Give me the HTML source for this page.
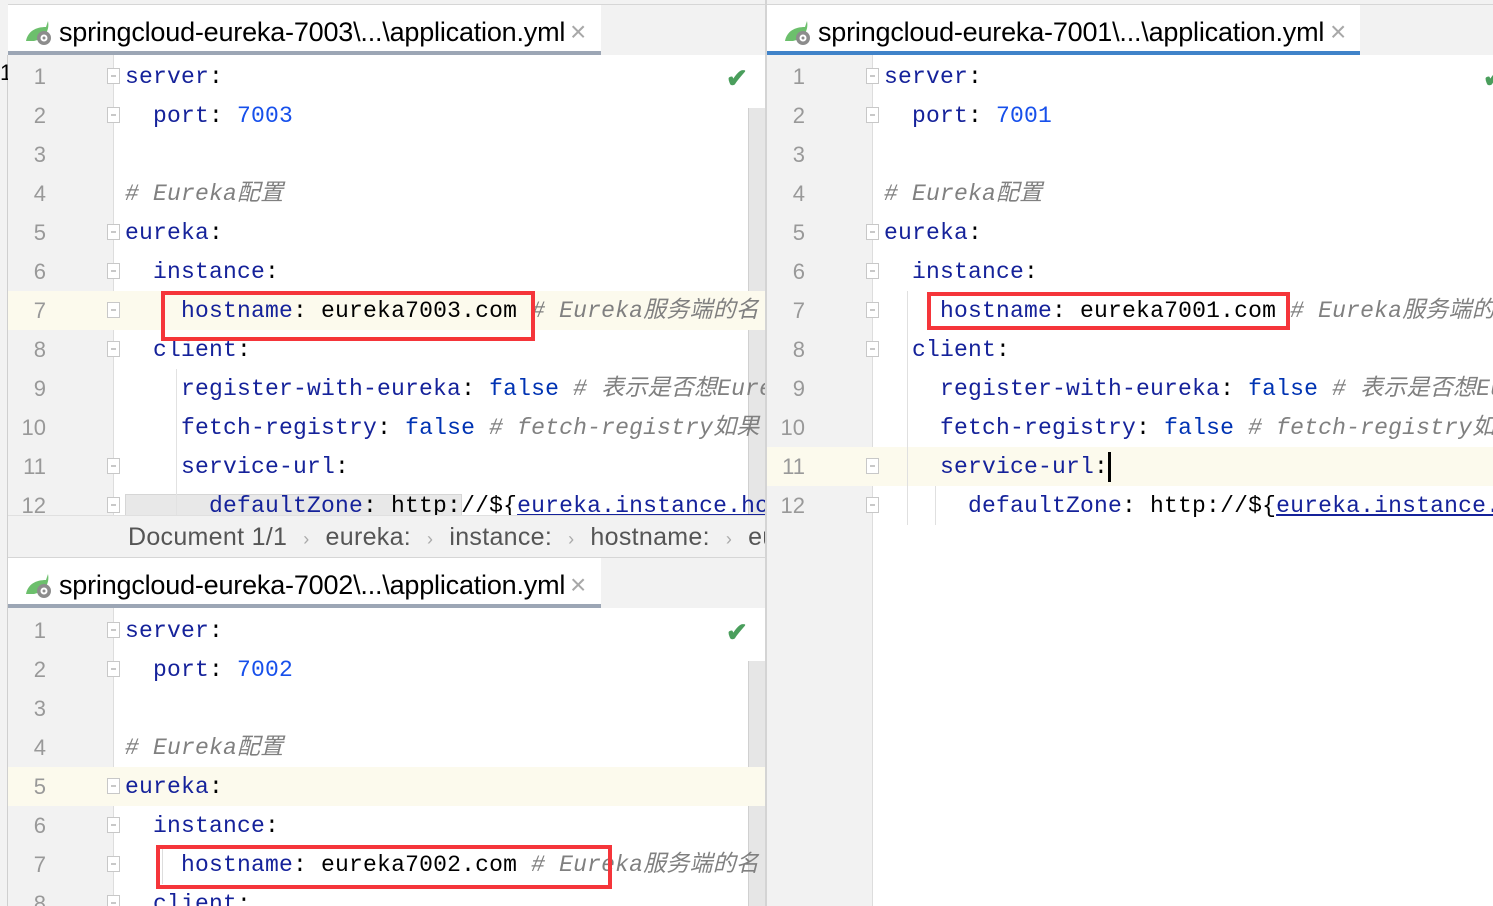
<!DOCTYPE html>
<html><head><meta charset="utf-8"><style>
*{margin:0;padding:0;box-sizing:border-box}
body{width:1493px;height:906px;overflow:hidden;background:#f2f2f2;position:relative;font-family:"Liberation Sans","Noto Sans CJK SC",sans-serif}
.abs{position:absolute}
.tabbar{position:absolute;background:#f2f2f2;border-top:1px solid #d6d6d6;border-bottom:1px solid #d6d6d6}
.tab{position:absolute;top:0;height:100%;background:#fff;font-size:27px;color:#000;line-height:54px;padding-left:51px;white-space:nowrap;letter-spacing:-0.2px}
.tab .x{position:absolute;color:#a8a8a8;font-size:28px;line-height:54px;font-weight:300}
.ul{position:absolute;left:0;right:0;bottom:0;height:4px}
.panel{position:absolute;background:#fff;overflow:hidden}
.gut{position:absolute;left:0;top:0;bottom:0;width:105px;background:#f2f2f2}
.ln{position:absolute;left:0;height:39px;line-height:40px;width:100%;font-family:"Liberation Mono","Noto Sans CJK SC",monospace;font-size:23px;letter-spacing:0.2px;white-space:pre}
.num{position:absolute;width:38px;text-align:right;color:#999;font-family:"Liberation Sans",sans-serif;font-size:22px;letter-spacing:0}
.code{position:absolute;left:117px}
.k{color:#15229a}.n{color:#1750eb}.b{color:#0033b3}.c{color:#808080;font-style:italic}.v{color:#000}
.hl{background:#fcfaed}
.fold{position:absolute;left:99px;width:13px;height:16px;border:1.5px solid #c8c8c8;background:#fff;top:11px}
.fold:after{content:"";position:absolute;left:3px;right:3px;top:6px;height:1.5px;background:#c8c8c8}
.red{position:absolute;border:4px solid #f5353a}
.chk{position:absolute;color:#4a9e5c;font-size:26px;font-weight:bold}
.icon{position:absolute;left:16px;top:14px;width:30px;height:28px}
.sep{color:#aaa;font-size:18px;margin:0 16px}
</style></head><body>

<div class="abs" style="left:7px;top:55px;width:1px;height:851px;background:#cfcfcf"></div>
<div class="abs" style="left:0;top:60px;font-size:22px">1</div>

<div class="tabbar" style="left:8px;top:4px;width:757px;height:52px">
  <div class="tab" style="left:0;width:593px">
    <svg class="icon" viewBox="0 0 30 28"><path d="M2 22 C4 12 12 8 22 8 L24 2 C26 12 20 20 10 22 Z" fill="#6cbf6c"/><circle cx="20" cy="19" r="7" fill="#8c8c8c"/><circle cx="20" cy="19" r="3.5" fill="#fff"/><circle cx="20" cy="19" r="1.5" fill="#8c8c8c"/></svg>
    springcloud-eureka-7003\...\application.yml<span class="x" style="left:562px;top:0">×</span>
    <div class="ul" style="background:#9ca6b5"></div>
  </div>
</div>

<div class="panel" style="left:8px;top:55px;width:757px;height:460px">
  <div class="gut"></div>
  <div class="abs" style="left:105px;top:0;width:1px;height:460px;background:#ddd"></div>
  <div class="abs" style="left:740px;top:53px;width:17px;height:407px;background:#e6e6e6;border-left:1px solid #d0d0d0"></div>
  <div class="chk" style="left:718px;top:8px">✔</div>
  <div class="ln" style="top:2px"><span class="num">1</span><span class="fold"></span><span class="code"><span class="k">server</span><span class="v">:</span></span></div>
  <div class="ln" style="top:41px"><span class="num">2</span><span class="fold"></span><span class="code">  <span class="k">port</span><span class="v">: </span><span class="n">7003</span></span></div>
  <div class="ln" style="top:80px"><span class="num">3</span></div>
  <div class="ln" style="top:119px"><span class="num">4</span><span class="code"><span class="c"># Eureka配置</span></span></div>
  <div class="ln" style="top:158px"><span class="num">5</span><span class="fold"></span><span class="code"><span class="k">eureka</span><span class="v">:</span></span></div>
  <div class="ln" style="top:197px"><span class="num">6</span><span class="fold"></span><span class="code">  <span class="k">instance</span><span class="v">:</span></span></div>
  <div class="ln hl" style="top:236px"><span class="num">7</span><span class="fold"></span><span class="code">    <span class="k">hostname</span><span class="v">: eureka7003.com </span><span class="c"># Eureka服务端的名</span></span></div>
  <div class="ln" style="top:275px"><span class="num">8</span><span class="fold"></span><span class="code">  <span class="k">client</span><span class="v">:</span></span></div>
  <div class="ln" style="top:314px"><span class="num">9</span><span class="code">    <span class="k">register-with-eureka</span><span class="v">: </span><span class="b">false</span> <span class="c"># 表示是否想Eureka</span></span></div>
  <div class="ln" style="top:353px"><span class="num">10</span><span class="code">    <span class="k">fetch-registry</span><span class="v">: </span><span class="b">false</span> <span class="c"># fetch-registry如果</span></span></div>
  <div class="ln" style="top:392px"><span class="num">11</span><span class="fold"></span><span class="code">    <span class="k">service-url</span><span class="v">:</span></span></div>
  <div class="abs" style="left:117px;top:439px;width:337px;height:30px;background:#e8e8e8;border:1px solid #d6d6d6"></div>
  <div class="ln" style="top:431px"><span class="num">12</span><span class="fold"></span><span class="code">      <span class="k">defaultZone</span><span class="v">: http://${</span><span class="k" style="text-decoration:underline">eureka.instance.ho</span></span></div>
  <div class="abs" style="left:154px;top:236px;width:1px;height:39px;background:#ddd"></div>
  <div class="abs" style="left:168px;top:314px;width:1px;height:146px;background:#e2e2e2"></div>
</div>
<div class="red" style="left:161px;top:291px;width:374px;height:50px"></div>

<div class="abs" style="left:8px;top:515px;width:757px;height:42px;background:#f2f2f2;border-top:1px solid #e0e0e0;font-size:25px;color:#555;line-height:42px;white-space:nowrap;overflow:hidden">
  <span style="position:absolute;left:120px;letter-spacing:0.3px">Document 1/1<span class="sep">›</span>eureka:<span class="sep">›</span>instance:<span class="sep">›</span>hostname:<span class="sep">›</span>eureka</span>
</div>

<div class="tabbar" style="left:8px;top:557px;width:757px;height:52px">
  <div class="tab" style="left:0;width:593px">
    <svg class="icon" viewBox="0 0 30 28"><path d="M2 22 C4 12 12 8 22 8 L24 2 C26 12 20 20 10 22 Z" fill="#6cbf6c"/><circle cx="20" cy="19" r="7" fill="#8c8c8c"/><circle cx="20" cy="19" r="3.5" fill="#fff"/><circle cx="20" cy="19" r="1.5" fill="#8c8c8c"/></svg>
    springcloud-eureka-7002\...\application.yml<span class="x" style="left:562px;top:0">×</span>
    <div class="ul" style="background:#9ca6b5"></div>
  </div>
</div>

<div class="panel" style="left:8px;top:608px;width:757px;height:298px">
  <div class="gut"></div>
  <div class="abs" style="left:105px;top:0;width:1px;height:298px;background:#ddd"></div>
  <div class="abs" style="left:740px;top:53px;width:17px;height:245px;background:#e6e6e6;border-left:1px solid #d0d0d0"></div>
  <div class="chk" style="left:718px;top:9px">✔</div>
  <div class="ln" style="top:3px"><span class="num">1</span><span class="fold"></span><span class="code"><span class="k">server</span><span class="v">:</span></span></div>
  <div class="ln" style="top:42px"><span class="num">2</span><span class="fold"></span><span class="code">  <span class="k">port</span><span class="v">: </span><span class="n">7002</span></span></div>
  <div class="ln" style="top:81px"><span class="num">3</span></div>
  <div class="ln" style="top:120px"><span class="num">4</span><span class="code"><span class="c"># Eureka配置</span></span></div>
  <div class="ln hl" style="top:159px"><span class="num">5</span><span class="fold"></span><span class="code"><span class="k">eureka</span><span class="v">:</span></span></div>
  <div class="ln" style="top:198px"><span class="num">6</span><span class="fold"></span><span class="code">  <span class="k">instance</span><span class="v">:</span></span></div>
  <div class="ln" style="top:237px"><span class="num">7</span><span class="fold"></span><span class="code">    <span class="k">hostname</span><span class="v">: eureka7002.com </span><span class="c"># Eureka服务端的名</span></span></div>
  <div class="ln" style="top:276px"><span class="num">8</span><span class="fold"></span><span class="code">  <span class="k">client</span><span class="v">:</span></span></div>
  <div class="abs" style="left:154px;top:237px;width:1px;height:39px;background:#ddd"></div>
</div>
<div class="red" style="left:156px;top:845px;width:456px;height:44px"></div>

<div class="abs" style="left:765px;top:0;width:2px;height:906px;background:#d4d4d4"></div>

<div class="tabbar" style="left:767px;top:4px;width:726px;height:52px">
  <div class="tab" style="left:0;width:593px">
    <svg class="icon" viewBox="0 0 30 28"><path d="M2 22 C4 12 12 8 22 8 L24 2 C26 12 20 20 10 22 Z" fill="#6cbf6c"/><circle cx="20" cy="19" r="7" fill="#8c8c8c"/><circle cx="20" cy="19" r="3.5" fill="#fff"/><circle cx="20" cy="19" r="1.5" fill="#8c8c8c"/></svg>
    springcloud-eureka-7001\...\application.yml<span class="x" style="left:563px;top:0">×</span>
    <div class="ul" style="background:#4083c9"></div>
  </div>
</div>

<div class="panel" style="left:767px;top:55px;width:726px;height:851px">
  <div class="gut"></div>
  <div class="abs" style="left:105px;top:0;width:1px;height:851px;background:#ddd"></div>
  <div class="chk" style="left:716px;top:8px">✔</div>
  <div class="ln" style="top:2px"><span class="num">1</span><span class="fold"></span><span class="code"><span class="k">server</span><span class="v">:</span></span></div>
  <div class="ln" style="top:41px"><span class="num">2</span><span class="fold"></span><span class="code">  <span class="k">port</span><span class="v">: </span><span class="n">7001</span></span></div>
  <div class="ln" style="top:80px"><span class="num">3</span></div>
  <div class="ln" style="top:119px"><span class="num">4</span><span class="code"><span class="c"># Eureka配置</span></span></div>
  <div class="ln" style="top:158px"><span class="num">5</span><span class="fold"></span><span class="code"><span class="k">eureka</span><span class="v">:</span></span></div>
  <div class="ln" style="top:197px"><span class="num">6</span><span class="fold"></span><span class="code">  <span class="k">instance</span><span class="v">:</span></span></div>
  <div class="ln" style="top:236px"><span class="num">7</span><span class="fold"></span><span class="code">    <span class="k">hostname</span><span class="v">: eureka7001.com </span><span class="c"># Eureka服务端的名称</span></span></div>
  <div class="ln" style="top:275px"><span class="num">8</span><span class="fold"></span><span class="code">  <span class="k">client</span><span class="v">:</span></span></div>
  <div class="ln" style="top:314px"><span class="num">9</span><span class="code">    <span class="k">register-with-eureka</span><span class="v">: </span><span class="b">false</span> <span class="c"># 表示是否想Eureka</span></span></div>
  <div class="ln" style="top:353px"><span class="num">10</span><span class="code">    <span class="k">fetch-registry</span><span class="v">: </span><span class="b">false</span> <span class="c"># fetch-registry如果</span></span></div>
  <div class="ln hl" style="top:392px"><span class="num">11</span><span class="fold"></span><span class="code">    <span class="k">service-url</span><span class="v">:</span><span style="display:inline-block;width:3px;height:30px;background:#000;vertical-align:middle"></span></span></div>
  <div class="ln" style="top:431px"><span class="num">12</span><span class="fold"></span><span class="code">      <span class="k">defaultZone</span><span class="v">: http://${</span><span class="k" style="text-decoration:underline">eureka.instance.hostname</span></span></div>
  <div class="abs" style="left:140px;top:236px;width:1px;height:234px;background:#e0e0e0"></div>
  <div class="abs" style="left:168px;top:431px;width:1px;height:39px;background:#e0e0e0"></div>
</div>
<div class="red" style="left:927px;top:292px;width:363px;height:38px"></div>

</body></html>
